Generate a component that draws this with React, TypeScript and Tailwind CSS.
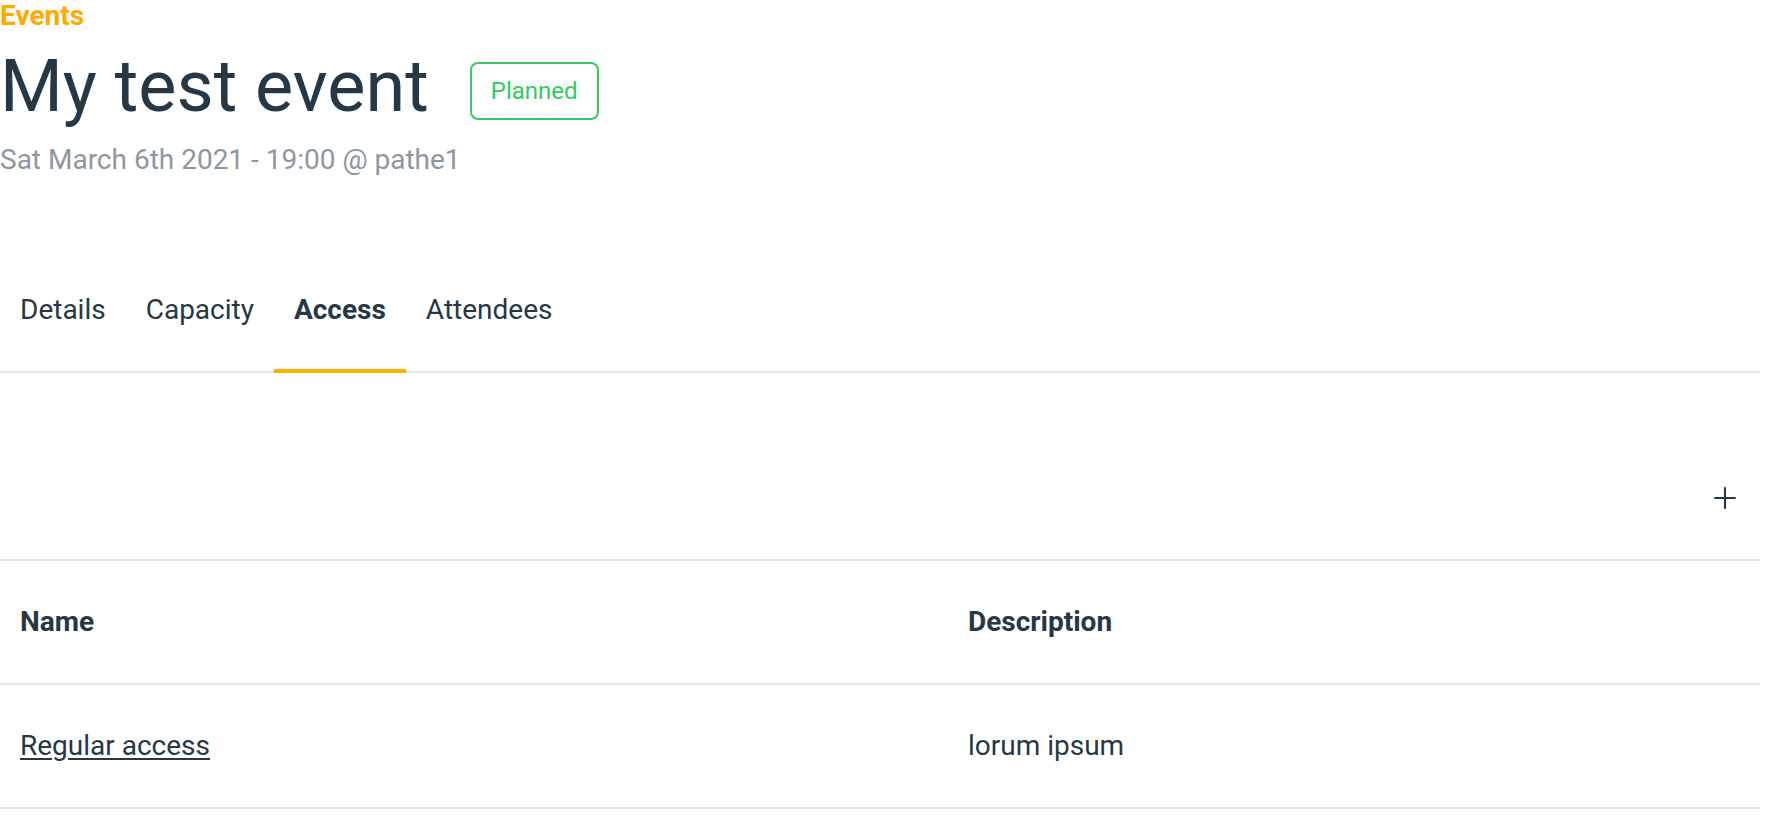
import { Plus } from 'lucide-react'
import clsx from 'clsx'

const tabs = ['Details', 'Capacity', 'Access', 'Attendees']

const accessItems = [{ name: 'Regular access', description: 'lorum ipsum' }]

export default function App() {
  const activeTab = 'Access'

  return (
    <div className="min-h-screen bg-white pr-[10px] font-['Roboto',sans-serif] text-[#263746]">
      <header>
        <div className="text-[28px] leading-8 font-bold text-[#ffaa00]">Events</div>
        <div className="mt-[19px] flex items-start">
          <h1 className="text-[72px] leading-none">My test event</h1>
          <span className="mt-[11px] ml-[41px] flex h-[58px] items-center rounded-lg border-2 border-[#33cc5f] px-[19px] text-[24px] text-[#2ecc5a]">
            Planned
          </span>
        </div>
        <p className="mt-[19px] text-[28px] leading-9 text-[#8e979f]">Sat March 6th 2021 - 19:00 @ pathe1</p>
      </header>

      <nav className="mt-[112px] flex border-b-2 border-[#e8e8e8]">
        {tabs.map((tab) => (
          <button
            key={tab}
            className={clsx(
              '-mb-[2px] border-b-4 px-[20px] pb-[40px] text-[28px] leading-[39px]',
              tab === activeTab ? 'border-[#ffb000] font-bold' : 'border-transparent',
            )}
          >
            {tab}
          </button>
        ))}
      </nav>

      <div className="flex h-[188px] items-end justify-end border-b-2 border-[#e8e8e8] pr-[7px] pb-[33px]">
        <button className="flex h-14 w-14 items-center justify-center">
          <Plus className="h-[34px] w-[34px]" strokeWidth={1.5} />
        </button>
      </div>

      <table className="w-full border-collapse text-left text-[28px]">
        <thead>
          <tr className="h-[123px] border-b-2 border-[#e8e8e8]">
            <th className="w-[948px] px-[20px] font-bold">Name</th>
            <th className="px-[20px] font-bold">Description</th>
          </tr>
        </thead>
        <tbody>
          {accessItems.map((item) => (
            <tr key={item.name} className="h-[124px] border-b-2 border-[#e8e8e8]">
              <td className="px-[20px]">
                <a href="#" className="underline underline-offset-[3px]">
                  {item.name}
                </a>
              </td>
              <td className="px-[20px]">{item.description}</td>
            </tr>
          ))}
        </tbody>
      </table>
    </div>
  )
}
